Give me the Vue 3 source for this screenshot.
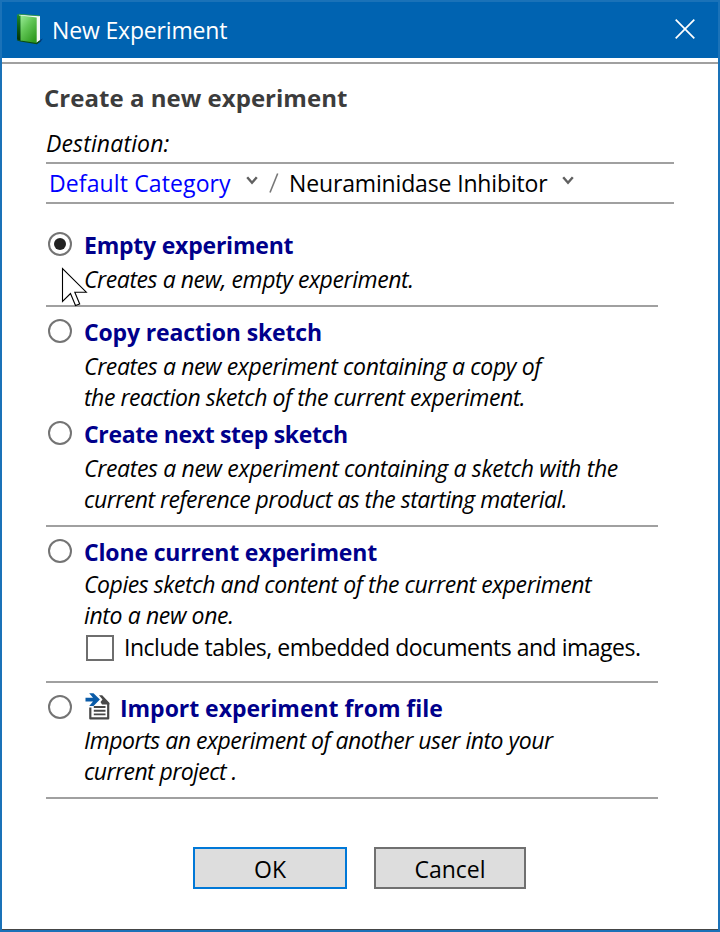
<script setup>
import { ref } from 'vue'

const selected = ref('empty')
const includeExtras = ref(false)

const groups = [
  {
    id: 'g-empty',
    options: [
      {
        id: 'empty',
        title: 'Empty experiment',
        tracking: -0.22,
        lines: [{ text: 'Creates a new, empty experiment.', tracking: -0.42 }],
      },
    ],
  },
  {
    id: 'g-sketch',
    options: [
      {
        id: 'copy',
        title: 'Copy reaction sketch',
        tracking: -0.14,
        lines: [
          { text: 'Creates a new experiment containing a copy of', tracking: -0.38 },
          { text: 'the reaction sketch of the current experiment.', tracking: -0.46 },
        ],
      },
      {
        id: 'next',
        title: 'Create next step sketch',
        tracking: -0.35,
        lines: [
          { text: 'Creates a new experiment containing a sketch with the', tracking: -0.34 },
          { text: 'current reference product as the starting material.', tracking: -0.52 },
        ],
      },
    ],
  },
  {
    id: 'g-clone',
    options: [
      {
        id: 'clone',
        title: 'Clone current experiment',
        tracking: -0.16,
        lines: [
          { text: 'Copies sketch and content of the current experiment', tracking: -0.44 },
          { text: 'into a new one.', tracking: -0.37 },
        ],
        extra: 'Include tables, embedded documents and images.',
      },
    ],
  },
  {
    id: 'g-import',
    options: [
      {
        id: 'import',
        title: 'Import experiment from file',
        tracking: -0.04,
        icon: true,
        lines: [
          { text: 'Imports an experiment of another user into your', tracking: -0.49 },
          { text: 'current project .', tracking: -0.58 },
        ],
      },
    ],
  },
]

const track = (n) => ({ letterSpacing: n + 'px' })
</script>

<template>
  <div class="dialog">
    <header class="titlebar">
      <svg class="book" width="28" height="32" viewBox="0 0 28 32">
        <defs>
          <linearGradient id="cover" x1="0" y1="0" x2="0.7" y2="1">
            <stop offset="0" stop-color="#9aec98" />
            <stop offset="0.45" stop-color="#62c656" />
            <stop offset="1" stop-color="#2f9a1f" />
          </linearGradient>
          <linearGradient id="spine" x1="0" y1="0" x2="0" y2="1">
            <stop offset="0" stop-color="#1e8a2a" />
            <stop offset="0.5" stop-color="#0b5a16" />
            <stop offset="1" stop-color="#032d08" />
          </linearGradient>
        </defs>
        <path d="M21 28.500L26.800 25.500L24.500 29L21 30.800Z" fill="#03397a" />
        <path d="M3 1.500L24 3V27.500L21 29.500L3 27.500Z" fill="#f4f8f4" />
        <path d="M1 2L5 2.800V28L1 26.500Z" fill="url(#spine)" />
        <path d="M4.500 2.600L20.700 4.600V30.500L4.500 28Z" fill="url(#cover)" />
        <path d="M1 26.700L4.500 28L20.700 30.500L24 27.800" fill="none" stroke="#0b4c10" stroke-width="1.200" />
        <path d="M1 2.200L3 1.300L23.500 2.800" fill="none" stroke="#2d9a35" stroke-width=".8" />
      </svg>
      <span class="caption">New Experiment</span>
      <button class="close" aria-label="Close">
        <svg width="20" height="20" viewBox="0 0 20 20">
          <path d="M.7.700L19.300 19.300M19.300.700L.7 19.300" stroke="#fff" stroke-width="1.700" />
        </svg>
      </button>
    </header>

    <main class="content">
      <h1 class="heading">Create a new experiment</h1>
      <p class="dest-label">Destination:</p>
      <nav class="path">
        <a class="category">Default Category</a>
        <svg class="chevron" width="12" height="10" viewBox="0 0 12 10">
          <path d="M1.200 1.200L6 6.700L10.800 1.200" fill="none" stroke="#606060" stroke-width="2.400" />
        </svg>
        <svg class="slash" width="10" height="20" viewBox="0 0 10 20">
          <path d="M1 19.500L8.700.5" stroke="#777" stroke-width="1.600" />
        </svg>
        <span class="project">Neuraminidase Inhibitor</span>
        <svg class="chevron" width="12" height="10" viewBox="0 0 12 10">
          <path d="M1.200 1.200L6 6.700L10.800 1.200" fill="none" stroke="#606060" stroke-width="2.400" />
        </svg>
      </nav>

      <section v-for="group in groups" :key="group.id" :class="['group', group.id]">
        <div v-for="o in group.options" :key="o.id" class="option" @click="selected = o.id">
          <span :class="['radio', { checked: selected === o.id }]"></span>
          <div class="body">
            <h2 class="title">
              <svg v-if="o.icon" class="import-icon" width="26" height="28" viewBox="0 0 26 28">
                <path d="M5.300 14.500V25.400H23.200V10" fill="none" stroke="#484848" stroke-width="2.200" stroke-linejoin="round" />
                <path d="M14 2.200H17.200L24.300 9.800V11.500H17L15.500 9L17.500 6.500Z" fill="#484848" />
                <path d="M8.800 14H20.500M8.800 17.700H20.500M8.800 21.400H20.500" stroke="#484848" stroke-width="1.900" />
                <path d="M.5 4.800H8L4.200.3H8.500L14.900 6.600L8.500 13H4.200L8 8.400H.5Z" fill="#0a5ba8" />
              </svg>
              <span :style="track(o.tracking)">{{ o.title }}</span>
            </h2>
            <p v-for="line in o.lines" :key="line.text" class="line" :style="track(line.tracking)">{{ line.text }}</p>
            <div v-if="o.extra" class="extra" @click.stop="includeExtras = !includeExtras">
              <span :class="['checkbox', { ticked: includeExtras }]"></span>
              <span>{{ o.extra }}</span>
            </div>
          </div>
        </div>
      </section>

      <footer class="actions">
        <button class="btn primary">OK</button>
        <button class="btn secondary">Cancel</button>
      </footer>
    </main>

    <svg class="pointer" width="27" height="40" viewBox="0 0 27 40">
      <path d="M1.500 1.500V34.500L9.500 26.500L14.500 38.500L18.700 37L13.800 25.200H25.300Z" fill="#fff" stroke="#000" stroke-width="1.100" />
    </svg>
  </div>
</template>

<style>
body {
  background: #fff;
}
</style>

<style scoped>
.dialog {
  position: relative;
  box-sizing: border-box;
  width: 720px;
  height: 932px;
  border: 2px solid #1a72b8;
  background: #fff;
  box-shadow: inset 0 -1px 0 #454545;
  color: #000;
  font-family: "Open Sans", "Noto Sans", sans-serif;
  font-size: 23px;
  white-space: nowrap;
}
.titlebar {
  display: flex;
  align-items: center;
  height: 56px;
  padding: 0 23px 0 14px;
  background: #0063b1;
  color: #fff;
}
.book {
  margin-top: -2px;
}
.caption {
  margin-left: 8px;
  letter-spacing: -0.16px;
  line-height: 32px;
}
.close {
  display: flex;
  margin-left: auto;
  margin-top: -2px;
  padding: 0;
  border: 0;
  background: none;
}
.content {
  margin-top: 4px;
  padding: 17px 0 0 44px;
  border-top: 2px solid #a0a0a0;
}
h1, h2, p {
  margin: 0;
}
.heading {
  margin-left: -2px;
  font-size: 24px;
  line-height: 34px;
  letter-spacing: 0.03px;
  color: #3c3c3c;
}
.dest-label {
  margin-top: 12px;
  line-height: 32px;
  padding-bottom: 3px;
  font-style: italic;
  letter-spacing: 0.15px;
}
.path {
  display: flex;
  align-items: center;
  box-sizing: border-box;
  width: 628px;
  height: 42px;
  padding-left: 3px;
  border-top: 2px solid #a0a0a0;
  border-bottom: 2px solid #a0a0a0;
}
.category {
  width: 197px;
  color: #0000ff;
  letter-spacing: 0.12px;
}
.chevron {
  margin-top: -4px;
}
.slash {
  margin: 0 10px 0 11px;
}
.project {
  width: 273px;
  letter-spacing: -0.15px;
}
.group {
  box-sizing: border-box;
  width: 612px;
  border-bottom: 2px solid #a0a0a0;
}
.g-empty {
  height: 103px;
  padding-top: 26px;
}
.g-sketch {
  height: 220px;
  padding-top: 10px;
}
.g-clone {
  height: 156px;
  padding-top: 10px;
}
.g-import {
  height: 116px;
  padding-top: 10px;
}
.option {
  display: flex;
}
.option + .option {
  margin-top: 6px;
}
.radio {
  display: flex;
  align-items: center;
  justify-content: center;
  box-sizing: border-box;
  flex: none;
  width: 24px;
  height: 24px;
  margin: 2px 12px 0 2px;
  border: 2px solid #747474;
  border-radius: 50%;
}
.radio.checked::after {
  content: "";
  width: 12px;
  height: 12px;
  border-radius: 50%;
  background: #222;
}
.title {
  display: flex;
  align-items: center;
  height: 34px;
  margin-top: -2px;
  font-size: 23px;
  line-height: 31px;
  font-weight: 700;
  color: #00008b;
}
.title + .line {
  margin-top: 2px;
}
.g-clone .title + .line,
.g-import .title + .line {
  margin-top: 0;
}
.import-icon {
  margin: -3px 9px 0 1px;
}
.line {
  height: 31px;
  line-height: 31px;
  font-style: italic;
}
.extra {
  display: flex;
  align-items: center;
  height: 32px;
  margin-top: 0;
  letter-spacing: -0.49px;
}
.checkbox {
  box-sizing: border-box;
  width: 28px;
  height: 26px;
  margin: 2px 10px 0 2px;
  border: 2px solid #6e6e6e;
}
.checkbox.ticked {
  background: #6e6e6e;
}
.actions {
  display: flex;
  gap: 27px;
  padding: 48px 0 0 147px;
}
.btn {
  box-sizing: border-box;
  height: 42px;
  padding: 2px 0 0;
  border: 2px solid #707070;
  background: #ddd;
  color: #000;
  font: inherit;
  line-height: 36px;
}
.btn.primary {
  width: 154px;
  border-color: #0078d7;
}
.btn.secondary {
  width: 152px;
}
.pointer {
  position: absolute;
  left: 59px;
  top: 265px;
}
</style>
